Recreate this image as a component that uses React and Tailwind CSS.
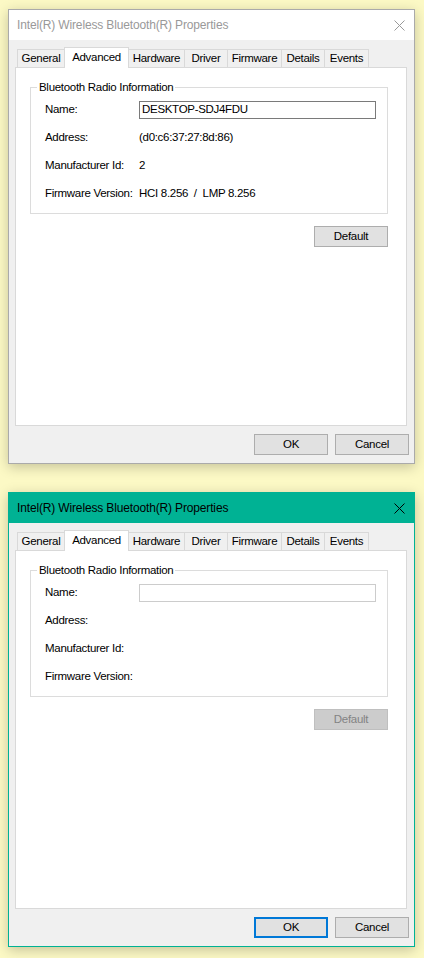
import React from "react";

const TABS = [
  { label: "General", w: "w-[48px]" },
  { label: "Advanced", w: "w-[65px]" },
  { label: "Hardware", w: "w-[57px]" },
  { label: "Driver", w: "w-[44px]" },
  { label: "Firmware", w: "w-[55px]" },
  { label: "Details", w: "w-[44px]" },
  { label: "Events", w: "w-[45px]" },
];

const CloseIcon = ({ color }) => (
  <svg width="11" height="11" viewBox="0 0 11 11" fill="none">
    <path d="M0.5 0.5L10.5 10.5M10.5 0.5L0.5 10.5" stroke={color} strokeWidth="1" />
  </svg>
);

const Row = ({ label, children }) => (
  <div className="flex items-center h-[18px]">
    <div className="w-[94px] shrink-0">{label}</div>
    {children}
  </div>
);

const PropertiesWindow = ({ active, filled }) => {
  return (
    <div
      className={`w-[407px] h-[455px] flex flex-col bg-[#f0f0f0] border shadow-[0_3px_12px_rgba(0,0,0,0.22)] ${
        active ? "border-[#00b294]" : "border-[#aaaaaa]"
      }`}
    >
      {/* Title bar */}
      <div
        className={`h-[30px] shrink-0 flex items-center justify-between pl-[8px] pr-[9px] ${
          active ? "bg-[#00b294] text-black" : "bg-white text-[#999999]"
        }`}
      >
        <span className="text-[12px] tracking-[-0.15px]">Intel(R) Wireless Bluetooth(R) Properties</span>
        <CloseIcon color={active ? "#000000" : "#999999"} />
      </div>

      {/* Tabs */}
      <div className="mt-[7px] ml-[6px] pl-[2px] h-[20px] flex items-end relative z-10">
        {TABS.map((t, i) => {
          const selected = t.label === "Advanced";
          return (
            <div
              key={t.label}
              className={`${t.w} ${i > 0 ? "-ml-px" : ""} flex items-center justify-center border-l border-t border-r border-[#d9d9d9] ${
                selected
                  ? "h-[21px] -mb-px bg-white relative z-10"
                  : "h-[18px] pt-[1px] bg-[#f0f0f0]"
              }`}
            >
              {t.label}
            </div>
          );
        })}
      </div>

      {/* Panel */}
      <div className="ml-[6px] mr-[7px] h-[359px] shrink-0 bg-white border border-[#d9d9d9] pt-[12px] pl-[14px]">
        <fieldset className="w-[358px] border border-[#dcdcdc] m-0 p-0">
          <legend className="ml-[6px] px-[2px] leading-[14px]">Bluetooth Radio Information</legend>
          <div className="pl-[14px] pt-[7px] pb-[10px] flex flex-col gap-[10px]">
            <Row label="Name:">
              <div
                className={`w-[237px] h-[18px] bg-white border px-[2px] flex items-center ${
                  filled ? "border-[#7a7a7a]" : "border-[#cccccc]"
                }`}
              >
                {filled ? "DESKTOP-SDJ4FDU" : ""}
              </div>
            </Row>
            <Row label="Address:">{filled && <span>(d0:c6:37:27:8d:86)</span>}</Row>
            <Row label="Manufacturer Id:">{filled && <span>2</span>}</Row>
            <Row label="Firmware Version:">
              {filled && <span className="whitespace-pre">HCI 8.256  /  LMP 8.256</span>}
            </Row>
          </div>
        </fieldset>
        <div className="w-[358px] flex justify-end mt-[12px]">
          <div
            className={`w-[74px] h-[21px] border flex items-center justify-center ${
              filled
                ? "bg-[#e1e1e1] border-[#adadad]"
                : "bg-[#cccccc] border-[#bfbfbf] text-[#838383]"
            }`}
          >
            Default
          </div>
        </div>
      </div>

      {/* Bottom buttons */}
      <div className="mt-[8px] pr-[5px] flex justify-end gap-[7px]">
        <div
          className={`w-[74px] h-[21px] bg-[#e1e1e1] flex items-center justify-center ${
            active ? "border-2 border-[#0078d7]" : "border border-[#adadad]"
          }`}
        >
          OK
        </div>
        <div className="w-[74px] h-[21px] bg-[#e1e1e1] border border-[#adadad] flex items-center justify-center">
          Cancel
        </div>
      </div>
    </div>
  );
};

export default function App() {
  return (
    <div
      className="min-h-[958px] bg-[#fcf9c5] pt-[9px] pl-[8px] text-[11.5px] tracking-[-0.3px] text-black"
      style={{ fontFamily: '"Liberation Sans", Arial, sans-serif' }}
    >
      <PropertiesWindow active={false} filled />
      <div className="mt-[28px]">
        <PropertiesWindow active filled={false} />
      </div>
    </div>
  );
}
